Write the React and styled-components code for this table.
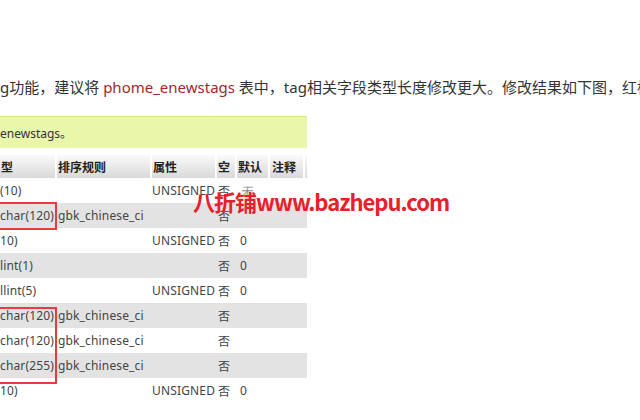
import React from "react";
import styled, { createGlobalStyle } from "styled-components";

const GlobalStyle = createGlobalStyle`
  html, body { margin: 0; padding: 0; background: #fff; }
  body { font-family: "Noto Sans", "Noto Sans CJK SC", sans-serif; overflow: hidden; }
`;

const Page = styled.div`
  width: 640px;
  height: 420px;
  padding-top: 75px;
  box-sizing: border-box;
  overflow: hidden;
`;

const Para = styled.p`
  margin: 0;
  font-size: 15px;
  line-height: 24px;
  color: #333;
  white-space: nowrap;
  font-family: "Noto Sans", "Noto Sans CJK SC", sans-serif;
`;

const Hl = styled.span`
  color: #a0282a;
`;

const Figure = styled.div`
  position: relative;
  margin-top: 17px;
  width: 307px;
`;

const Clip = styled.div`
  width: 307px;
  overflow: hidden;
`;

const Notice = styled.div`
  height: 31px;
  background: #eaf7ab;
  border-top: 1px solid #d3ec86;
  display: flex;
  align-items: center;
  font-size: 12px;
  color: #333;
  font-family: "Noto Sans", "Noto Sans CJK SC", sans-serif;
`;

const Table = styled.div`
  margin-top: 7px;
  display: flex;
  flex-direction: column;
  font-family: "Noto Sans", "Noto Sans CJK SC", sans-serif;
  font-size: 12px;
  color: #444;
`;

const cols = "57px 95px 65px 20px 33px 35px 2px";

const Head = styled.div`
  display: grid;
  grid-template-columns: ${cols};
  height: 23px;
`;

const HeadCell = styled.div`
  margin-right: 2px;
  padding-left: ${(p) => p.$pl ?? 1}px;
  background: linear-gradient(#fafafa, #d9d9d9);
  display: flex;
  align-items: center;
  font-weight: 700;
  color: #222;
  white-space: nowrap;
  overflow: hidden;
  &:last-child { margin-right: 0; }
`;

const Row = styled.div`
  display: grid;
  grid-template-columns: ${cols};
  height: 25px;
  align-items: center;
  background: ${(p) => (p.$alt ? "#e3e3e3" : "#fff")};
`;

const Cell = styled.div`
  padding-left: ${(p) => p.$pl ?? 1}px;
  white-space: nowrap;
  overflow: visible;
  color: ${(p) => (p.$muted ? "#888" : "#444")};
  font-style: ${(p) => (p.$italic ? "italic" : "normal")};
  letter-spacing: 0.15px;
`;

const RedBox = styled.div`
  position: absolute;
  left: -3px;
  width: 60px;
  box-sizing: border-box;
  border: 2px solid #ea3a3f;
  pointer-events: none;
`;

const Watermark = styled.div`
  position: absolute;
  left: 193px;
  top: 70px;
  font-family: "Noto Sans CJK SC", "Noto Sans", sans-serif;
  font-weight: 700;
  font-size: 22px;
  line-height: 30px;
  color: #e8202a;
  white-space: nowrap;
  letter-spacing: -1px;
`;

const rows = [
  { t: "(10)", c: "", a: "UNSIGNED", n: "否", d: "无", none: true },
  { t: "char(120)", c: "gbk_chinese_ci", a: "", n: "否", d: "" },
  { t: "10)", c: "", a: "UNSIGNED", n: "否", d: "0" },
  { t: "lint(1)", c: "", a: "", n: "否", d: "0" },
  { t: "llint(5)", c: "", a: "UNSIGNED", n: "否", d: "0" },
  { t: "char(120)", c: "gbk_chinese_ci", a: "", n: "否", d: "" },
  { t: "char(120)", c: "gbk_chinese_ci", a: "", n: "否", d: "" },
  { t: "char(255)", c: "gbk_chinese_ci", a: "", n: "否", d: "" },
  { t: "10)", c: "", a: "UNSIGNED", n: "否", d: "0" },
];

export default function App() {
  return (
    <Page>
      <GlobalStyle />
      <Para>
        g功能，建议将 <Hl>phome_enewstags</Hl> 表中，tag相关字段类型长度修改更大。修改结果如下图，红框
      </Para>
      <Figure>
        <Clip>
          <Notice>enewstags。</Notice>
          <Table>
            <Head>
              <HeadCell>型</HeadCell>
              <HeadCell $pl={1}>排序规则</HeadCell>
              <HeadCell $pl={1}>属性</HeadCell>
              <HeadCell $pl={1}>空</HeadCell>
              <HeadCell $pl={1}>默认</HeadCell>
              <HeadCell $pl={2}>注释</HeadCell>
              <HeadCell />
            </Head>
            {rows.map((r, i) => (
              <Row key={i} $alt={i % 2 === 1}>
                <Cell $pl={0}>{r.t}</Cell>
                <Cell>{r.c}</Cell>
                <Cell $pl={0}>{r.a}</Cell>
                <Cell>{r.n}</Cell>
                <Cell $pl={3} $muted={r.none} $italic={r.none}>{r.d}</Cell>
                <Cell />
                <Cell />
              </Row>
            ))}
          </Table>
        </Clip>
        <RedBox style={{ top: 86, height: 28 }} />
        <RedBox style={{ top: 191, height: 77 }} />
        <Watermark>八折铺www.bazhepu.com</Watermark>
      </Figure>
    </Page>
  );
}
